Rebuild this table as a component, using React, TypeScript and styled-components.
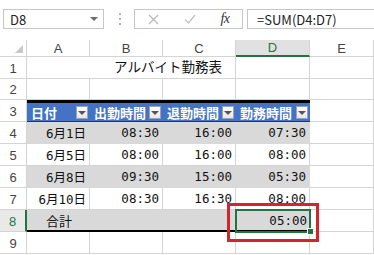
import React from "react";
import styled, { createGlobalStyle } from "styled-components";

const GlobalStyle = createGlobalStyle`
  html, body {
    margin: 0;
    padding: 0;
    background: #fff;
  }
  body {
    font-family: "Liberation Sans", "Noto Sans CJK JP", sans-serif;
    overflow: hidden;
  }
`;

const GRID = "#d4d4d4";
const GREEN = "#217346";

const Window = styled.div`
  width: 374px;
  height: 255px;
  overflow: hidden;
  position: relative;
  background: #fff;
`;

/* ---------- formula bar ---------- */

const FormulaBar = styled.div`
  display: flex;
  align-items: flex-start;
  height: 40px;
  padding: 9px 0 0 3px;
  box-sizing: border-box;
`;

const NameBox = styled.div`
  width: 101px;
  height: 20px;
  box-sizing: border-box;
  border: 1px solid #c6c6c6;
  display: flex;
  align-items: center;
  justify-content: space-between;
  padding: 0 5px 0 6px;
  font-family: "Noto Sans CJK JP", sans-serif;
  font-size: 13px;
  color: #222;
`;

const Caret = styled.span`
  width: 0;
  height: 0;
  border-left: 4px solid transparent;
  border-right: 4px solid transparent;
  border-top: 4px solid #6b6b6b;
`;

const Grip = styled.div`
  width: 2px;
  height: 20px;
  margin: 0 13px 0 15px;
  display: flex;
  flex-direction: column;
  justify-content: center;
  gap: 3px;
  & > i {
    display: block;
    width: 2px;
    height: 2px;
    background: #b4b4b4;
  }
`;

const ButtonBox = styled.div`
  width: 109px;
  height: 20px;
  box-sizing: border-box;
  border: 1px solid #c6c6c6;
  display: flex;
  align-items: center;
`;

const BarButton = styled.span<{ $w: number }>`
  width: ${(p) => p.$w}px;
  height: 100%;
  display: flex;
  align-items: center;
  justify-content: center;
`;

const Fx = styled.span`
  font-family: "Liberation Serif", serif;
  font-style: italic;
  font-size: 14px;
  color: #333;
  letter-spacing: -0.5px;
`;

const FormulaInput = styled.div`
  flex: 1;
  height: 20px;
  margin-left: 4px;
  box-sizing: border-box;
  border: 1px solid #c6c6c6;
  border-right: none;
  display: flex;
  align-items: center;
  padding-left: 9px;
  font-family: "Noto Sans CJK JP", sans-serif;
  font-size: 13px;
  color: #222;
`;

/* ---------- sheet grid ---------- */

const Sheet = styled.div`
  position: relative;
  display: grid;
  grid-template-columns: 27px 63px 73px 73px 74px 64px;
  grid-template-rows: 17px 22px 21px 22px 22px 22px 22px 22px 22px 22px;
`;

const Corner = styled.div`
  border-right: 1px solid ${GRID};
  border-bottom: 1px solid ${GRID};
  display: flex;
  align-items: flex-end;
  justify-content: flex-end;
  padding: 0 3px 3px 0;
`;

const ColHead = styled.div<{ $active?: boolean }>`
  box-sizing: border-box;
  border-right: 1px solid ${GRID};
  border-bottom: ${(p) => (p.$active ? `2px solid ${GREEN}` : `1px solid ${GRID}`)};
  background: ${(p) => (p.$active ? "#e1e1e1" : "#fff")};
  color: ${(p) => (p.$active ? GREEN : "#444")};
  font-size: 13px;
  display: flex;
  align-items: center;
  justify-content: center;
`;

const RowHead = styled.div<{ $active?: boolean }>`
  box-sizing: border-box;
  border-right: ${(p) => (p.$active ? `2px solid ${GREEN}` : `1px solid ${GRID}`)};
  border-bottom: 1px solid ${GRID};
  background: ${(p) => (p.$active ? "#e9e9e9" : "#fff")};
  color: ${(p) => (p.$active ? GREEN : "#444")};
  font-size: 13px;
  display: flex;
  align-items: flex-end;
  justify-content: center;
  padding-bottom: 2px;
`;

const Cell = styled.div`
  box-sizing: border-box;
  border-right: 1px solid ${GRID};
  border-bottom: 1px solid ${GRID};
`;

/* title is centred across A:D, only the C|D gridline shows through */
const Title = styled.div`
  grid-column: span 4;
  box-sizing: border-box;
  border-right: 1px solid ${GRID};
  border-bottom: 1px solid ${GRID};
  background: linear-gradient(${GRID}, ${GRID}) no-repeat 208px 0 / 1px 100%;
  font-family: "Noto Sans CJK JP", sans-serif;
  font-size: 13.5px;
  color: #111;
  display: flex;
  align-items: center;
  justify-content: center;
  padding-bottom: 3px;
`;

const HeadCell = styled.div`
  box-sizing: border-box;
  background: #4472c4;
  border-top: 3px solid #000;
  border-bottom: 1px solid #1f3864;
  color: #fff;
  font-family: "Noto Sans CJK JP", sans-serif;
  font-weight: bold;
  font-size: 13px;
  display: flex;
  align-items: center;
  justify-content: space-between;
  padding: 0 2px 0 4px;
`;

const FilterButton = styled.span`
  width: 12px;
  height: 13px;
  box-sizing: border-box;
  border: 1px solid #9aa3b5;
  background: linear-gradient(#ffffff, #e6e6e6);
  display: flex;
  align-items: center;
  justify-content: center;
  &::after {
    content: "";
    border-left: 4px solid transparent;
    border-right: 4px solid transparent;
    border-top: 4px solid #555;
    margin-top: 1px;
  }
`;

const DataCell = styled.div<{ $shade: boolean }>`
  box-sizing: border-box;
  background: ${(p) => (p.$shade ? "#d9d9d9" : "#fff")};
  border-right: 1px solid ${(p) => (p.$shade ? "#d9d9d9" : GRID)};
  border-bottom: 1px solid ${(p) => (p.$shade ? "#d9d9d9" : GRID)};
  font-family: "DejaVu Sans Mono", "Noto Sans CJK JP", monospace;
  font-size: 12.5px;
  color: #111;
  display: flex;
  align-items: center;
  justify-content: flex-end;
  padding-right: 3px;
`;

const TotalCell = styled.div<{ $selected?: boolean }>`
  position: relative;
  box-sizing: border-box;
  background: #d9d9d9;
  border-bottom: 2px solid #000;
  font-family: "DejaVu Sans Mono", "Noto Sans CJK JP", monospace;
  font-size: 12.5px;
  color: #111;
  display: flex;
  align-items: center;
  justify-content: flex-end;
  padding-right: 3px;
  ${(p) =>
    p.$selected &&
    `
    outline: 2px solid ${GREEN};
    outline-offset: -1px;
    z-index: 1;
    &::after {
      content: "";
      position: absolute;
      right: -4px;
      bottom: -5px;
      width: 5px;
      height: 5px;
      background: ${GREEN};
      border: 1px solid #fff;
    }
  `}
`;

const TotalLabel = styled(TotalCell)`
  justify-content: flex-start;
  padding-left: 19px;
  font-family: "Noto Sans CJK JP", sans-serif;
  font-size: 13px;
`;

const Callout = styled.div`
  position: absolute;
  left: 227px;
  top: 163px;
  width: 92px;
  height: 39px;
  box-sizing: border-box;
  border: 3px solid #d6242b;
  z-index: 2;
  pointer-events: none;
`;

const columns = ["A", "B", "C", "D", "E"];
const headers = ["日付", "出勤時間", "退勤時間", "勤務時間"];
const shifts = [
  ["6月1日", "08:30", "16:00", "07:30"],
  ["6月5日", "08:00", "16:00", "08:00"],
  ["6月8日", "09:30", "15:00", "05:30"],
  ["6月10日", "08:30", "16:30", "08:00"],
];

export default function App() {
  return (
    <Window>
      <GlobalStyle />
      <FormulaBar>
        <NameBox>
          D8
          <Caret />
        </NameBox>
        <Grip>
          <i />
          <i />
          <i />
        </Grip>
        <ButtonBox>
          <BarButton $w={37}>
            <svg width="11" height="11" viewBox="0 0 11 11">
              <path d="M1 1 L10 10 M10 1 L1 10" stroke="#b9b9b9" strokeWidth="1.3" fill="none" />
            </svg>
          </BarButton>
          <BarButton $w={36}>
            <svg width="12" height="10" viewBox="0 0 12 10">
              <path d="M1 5.5 L4.5 9 L11 1" stroke="#c4c4c4" strokeWidth="1.4" fill="none" />
            </svg>
          </BarButton>
          <BarButton $w={34}>
            <Fx>fx</Fx>
          </BarButton>
        </ButtonBox>
        <FormulaInput>=SUM(D4:D7)</FormulaInput>
      </FormulaBar>

      <Sheet>
        <Corner>
          <svg width="8" height="8" viewBox="0 0 8 8">
            <polygon points="8,0 8,8 0,8" fill="#c8c8c8" />
          </svg>
        </Corner>
        {columns.map((c) => (
          <ColHead key={c} $active={c === "D"}>
            {c}
          </ColHead>
        ))}

        <RowHead>1</RowHead>
        <Title>アルバイト勤務表</Title>
        <Cell />

        <RowHead>2</RowHead>
        {columns.map((c) => (
          <Cell key={c} />
        ))}

        <RowHead>3</RowHead>
        {headers.map((h) => (
          <HeadCell key={h}>
            {h}
            <FilterButton />
          </HeadCell>
        ))}
        <Cell />

        {shifts.map((row, i) => (
          <React.Fragment key={row[0]}>
            <RowHead>{i + 4}</RowHead>
            {row.map((v, j) => (
              <DataCell key={j} $shade={i % 2 === 0}>
                {v}
              </DataCell>
            ))}
            <Cell />
          </React.Fragment>
        ))}

        <RowHead $active>8</RowHead>
        <TotalLabel>合計</TotalLabel>
        <TotalCell />
        <TotalCell />
        <TotalCell $selected>05:00</TotalCell>
        <Cell />

        <RowHead>9</RowHead>
        {columns.map((c) => (
          <Cell key={c} />
        ))}

        <Callout />
      </Sheet>
    </Window>
  );
}
